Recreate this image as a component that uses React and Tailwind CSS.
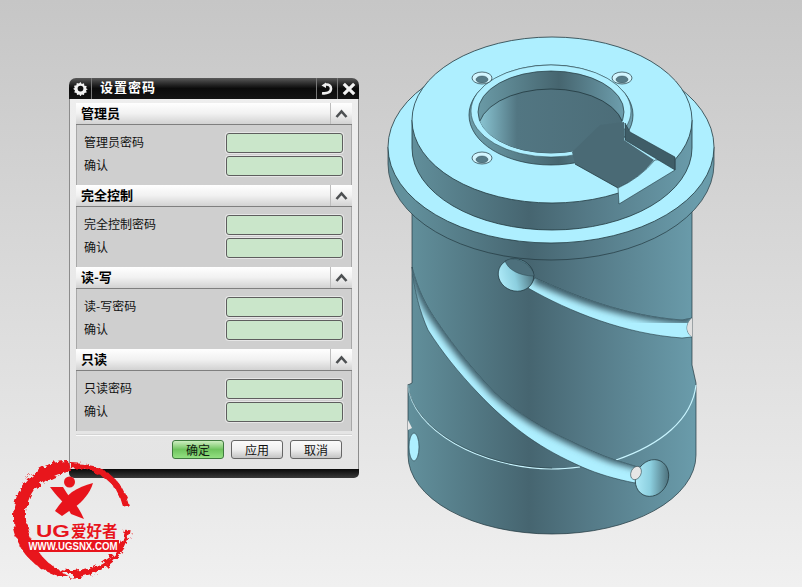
import { useId } from "react";

const CJK = "font-['Noto_Sans_CJK_SC','Liberation_Sans',sans-serif]";

const sections = [
  { title: "管理员", label: "管理员密码" },
  { title: "完全控制", label: "完全控制密码" },
  { title: "读-写", label: "读-写密码" },
  { title: "只读", label: "只读密码" },
];

function GearIcon() {
  return (
    <svg width="15" height="15" viewBox="0 0 24 24">
      <path
        d="M12 1.5l2 3.2 3.6-1 .6 3.7 3.7.6-1 3.6 2.6 1.4-2.6 1.9 1 3.6-3.7.6-.6 3.4-3.6-1-2 2.9-2-2.9-3.6 1-.6-3.4-3.7-.6 1-3.6L.1 12.4 2.7 11l-1-3.6 3.7-.6.6-3.7 3.6 1z"
        fill="#f2f2f2"
      />
      <circle cx="12" cy="12" r="4.6" fill="#111" />
    </svg>
  );
}

function Chevron() {
  return (
    <svg width="13" height="9" viewBox="0 0 13 9" fill="none">
      <path d="M1.5 8L6.5 2.5L11.5 8" stroke="#4d5052" strokeWidth="2.6" />
    </svg>
  );
}

function Section({ title, label }) {
  return (
    <div className="flex flex-col">
      <div className="flex h-[22px] items-stretch border-b border-[#7f7f7f] bg-gradient-to-b from-white via-[#f1f1f1] to-[#d2d2d2]">
        <div className="flex-1 pl-[5px] text-[13px] leading-[19px] font-bold text-black">{title}</div>
        <div className="flex w-[22px] items-center justify-center border-l border-[#bdbdbd]">
          <Chevron />
        </div>
      </div>
      <div className="flex h-[60px] flex-col gap-[3px] border-x border-[#a8a8a8] bg-[#cfcfcf] pt-[8px] pr-[8px] pl-[7px]">
        {[label, "确认"].map((text) => (
          <div key={text} className="flex h-[20px] items-center justify-between">
            <span className="mt-[-2px] text-[12px] text-[#111]">{text}</span>
            <input
              readOnly
              className="h-[20px] w-[117px] rounded-[3px] border border-[#5e5e5e] bg-[#cae6ca] shadow-[0_0_0_1px_#e6e6e6]"
            />
          </div>
        ))}
      </div>
    </div>
  );
}

function Dialog() {
  return (
    <div className={`absolute top-[78px] left-[69px] flex h-[400px] w-[290px] flex-col ${CJK}`}>
      <div className="flex h-[21px] items-stretch rounded-t-[7px] bg-gradient-to-b from-[#5a5a5a] via-[#0b0b0b] to-[#141414]">
        <div className="flex w-[23px] items-center justify-center border-r border-[#777]">
          <GearIcon />
        </div>
        <div className="flex-1 pl-[8px] text-[13px] leading-[18px] font-bold tracking-[1px] text-white">设置密码</div>
        <div className="flex w-[21px] items-center justify-center border-l border-[#777]">
          <svg width="14" height="13" viewBox="0 0 14 13" fill="none">
            <path d="M2 11.2C7.5 12 11 9.8 11 6.4C11 3.6 8.6 2 5.6 2.6" stroke="#eee" strokeWidth="2.6" />
            <path d="M1.5 3.4L6 .6V6z" fill="#eee" />
          </svg>
        </div>
        <div className="flex w-[22px] items-center justify-center border-l border-[#777]">
          <svg width="14" height="14" viewBox="0 0 14 14" fill="none">
            <path d="M1.8 1.8L12.2 12.2M12.2 1.8L1.8 12.2" stroke="#f2f2f2" strokeWidth="3.2" />
          </svg>
        </div>
      </div>
      <div className="flex flex-1 flex-col border-x border-[#8c8c8c] bg-gradient-to-b from-[#eeeeee] to-[#e4e4e4] px-[6px] pt-[4px]">
        {sections.map((s) => (
          <Section key={s.title} title={s.title} label={s.label} />
        ))}
        <div className="mt-[3px] h-[2px] border-b border-[#fafafa] bg-[#d4d4d4]" />
        <div className="mt-[4px] flex justify-end gap-[7px] pr-[10px]">
          <button className="h-[19px] w-[52px] rounded-[3px] border border-[#3f7a3f] bg-gradient-to-b from-[#cdeec0] via-[#6fc45e] to-[#93e082] text-[12px] leading-[14px] text-[#102010]">
            确定
          </button>
          <button className="h-[19px] w-[52px] rounded-[3px] border border-[#666] bg-gradient-to-b from-[#fbfbfb] via-[#efefef] to-[#c4c4c4] text-[12px] leading-[14px] text-[#111]">
            应用
          </button>
          <button className="h-[19px] w-[52px] rounded-[3px] border border-[#666] bg-gradient-to-b from-[#fbfbfb] via-[#efefef] to-[#c4c4c4] text-[12px] leading-[14px] text-[#111]">
            取消
          </button>
        </div>
      </div>
      <div className="h-[9px] rounded-b-[5px] bg-gradient-to-b from-[#0a0a0a] to-[#3a3a3a]" />
    </div>
  );
}

// the part in the 3D viewport
function Part() {
  const id = useId().replace(/:/g, "");
  const LIGHT = "#aeefff";
  const EDGE = "#22383f";
  const slotA =
    "M535 278C575 296 625 316 682 320L692 318C687 322 684 331 692 337L682 338C625 334 570 312 528 288Z";
  const slotB =
    "M412 267C418 290 426 306 438 323C455 348 475 372 495 393C518 414 542 428 568 440C585 448 600 455 615 460L641 468L635 483C615 479 598 474 582 467C562 458 545 449 528 437C510 424 494 410 478 393C458 372 442 352 428 330C420 312 414 290 412 267Z";
  return (
    <svg className="absolute inset-0" width="802" height="587" viewBox="0 0 802 587" fill="none">
      <defs>
        <linearGradient id={`${id}body`} gradientUnits="userSpaceOnUse" x1="408" y1="0" x2="696" y2="0">
          <stop offset="0" stopColor="#62909c" />
          <stop offset="0.42" stopColor="#466570" />
          <stop offset="0.62" stopColor="#547986" />
          <stop offset="1" stopColor="#6a9cab" />
        </linearGradient>
        <linearGradient id={`${id}wall`} gradientUnits="userSpaceOnUse" x1="478" y1="0" x2="625" y2="0">
          <stop offset="0" stopColor="#6a9aa6" />
          <stop offset="0.55" stopColor="#46656f" />
          <stop offset="1" stopColor="#6e9fae" />
        </linearGradient>
        <linearGradient id={`${id}floor`} gradientUnits="userSpaceOnUse" x1="478" y1="0" x2="655" y2="0">
          <stop offset="0" stopColor="#8cc8d6" />
          <stop offset="0.22" stopColor="#527682" />
          <stop offset="1" stopColor="#4a6a75" />
        </linearGradient>
        <linearGradient id={`${id}hole`} x1="0" y1="0.9" x2="1" y2="0.3">
          <stop offset="0" stopColor="#b8f2ff" />
          <stop offset="0.5" stopColor="#8ccfdf" />
          <stop offset="1" stopColor="#496b76" />
        </linearGradient>
        <clipPath id={`${id}clipA`}>
          <path d={slotA} />
        </clipPath>
        <clipPath id={`${id}clipB`}>
          <path d={slotB} />
        </clipPath>
        <clipPath id={`${id}bore`}>
          <ellipse cx="551" cy="112" rx="73" ry="41" />
        </clipPath>
        <filter id={`${id}blur`} x="-10%" y="-10%" width="120%" height="120%">
          <feGaussianBlur stdDeviation="3" />
        </filter>
      </defs>

      {/* lower body */}
      <path
        d={`M412 150V383L408 385V455A144 79 0 0 0 696 455V383L692 365V150Z`}
        fill={`url(#${id}body)`}
        stroke={EDGE}
        strokeWidth="0.7"
      />
      {/* ring gap */}
      <path d="M408 385C412 430 480 468 552 469C562 469 572 468 580 467" stroke="#c9f5ff" strokeWidth="1.2" />
      <path d="M696 385C692 420 660 445 616 460" stroke="#c9f5ff" strokeWidth="1.2" />
      <path d="M408 384C412 429 480 467 552 468" stroke={EDGE} strokeWidth="0.5" />

      {/* upper slot */}
      <path d={slotA} fill={LIGHT} stroke={EDGE} strokeWidth="0.6" />
      <g clipPath={`url(#${id}clipA)`}>
        <path d="M535 276C575 294 625 314 692 318" stroke="#3f5f6a" strokeWidth="14" filter={`url(#${id}blur)`} />
      </g>
      <ellipse cx="516" cy="275" rx="18" ry="16" transform="rotate(20 516 275)" fill={`url(#${id}hole)`} stroke={EDGE} strokeWidth="0.7" />
      <path d="M505 261C508 270 520 276 534 276C534 268 522 258 510 259Z" fill="#4d707c" stroke={EDGE} strokeWidth="0.4" />
      <path d="M692 318C687 322 684 331 692 337" fill="#e0e0e0" />

      {/* long slot */}
      <path d={slotB} fill={LIGHT} stroke={EDGE} strokeWidth="0.6" />
      <g clipPath={`url(#${id}clipB)`}>
        <path d="M412 262C418 288 426 304 438 321C455 346 475 370 495 391C518 412 542 426 568 438C585 446 600 453 615 458L645 466" stroke="#3f5f6a" strokeWidth="11" filter={`url(#${id}blur)`} />
      </g>
      <ellipse cx="652" cy="478" rx="16" ry="19" transform="rotate(28 652 478)" fill={`url(#${id}hole)`} stroke={EDGE} strokeWidth="0.7" />
      <ellipse cx="636" cy="473" rx="5" ry="7" transform="rotate(25 636 473)" fill="#e6e6e6" stroke={EDGE} strokeWidth="0.5" />

      {/* left hole */}
      <ellipse cx="414" cy="447" rx="5" ry="14" fill={LIGHT} stroke={EDGE} strokeWidth="0.6" />
      <path d="M408 420L412 428L408 430Z" fill="#e8e8e8" />

      {/* flange */}
      <path d="M388 147V164A163 96 0 0 0 714 164V147Z" fill={`url(#${id}body)`} stroke={EDGE} strokeWidth="0.7" />
      <ellipse cx="551" cy="147" rx="163" ry="96" fill={LIGHT} stroke={EDGE} strokeWidth="0.8" />

      {/* boss */}
      <path d="M412 120V148A140 82 0 0 0 692 148V120Z" fill={`url(#${id}body)`} stroke={EDGE} strokeWidth="0.8" />
      <ellipse cx="552" cy="120" rx="140" ry="83" fill={LIGHT} stroke={EDGE} strokeWidth="0.8" />

      {/* bore */}
      <ellipse cx="551" cy="115" rx="82" ry="50" fill={`url(#${id}wall)`} stroke={EDGE} strokeWidth="0.7" />
      <ellipse cx="551" cy="111" rx="80" ry="46" fill={LIGHT} stroke={EDGE} strokeWidth="0.5" />
      <ellipse cx="551" cy="112" rx="73" ry="41" fill={`url(#${id}wall)`} stroke={EDGE} strokeWidth="0.7" />
      <g clipPath={`url(#${id}bore)`}>
        <ellipse cx="551" cy="130" rx="73" ry="41" fill={`url(#${id}floor)`} stroke={EDGE} strokeWidth="0.8" />
      </g>

      {/* keyway */}
      <path d="M572 152L575 164L618 188Q640 178 654 160L624 140L624 122L600 125Z" fill="#4a6a75" />
      <path d="M575 164L618 188" stroke={EDGE} strokeWidth="0.8" />
      <path d="M618 188L619 204L675 170V159L655 160Q640 178 618 188Z" fill={LIGHT} stroke={EDGE} strokeWidth="0.6" />
      <path d="M630 132L675 157V170L655 158L625 140L625 123Z" fill="#3f5d67" stroke={EDGE} strokeWidth="0.6" />

      {/* screw holes */}
      {[
        [482, 78],
        [622, 78],
        [482, 158],
      ].map(([cx, cy]) => (
        <g key={`${cx}-${cy}`}>
          <ellipse cx={cx} cy={cy} rx="10" ry="6" fill="#d2f6ff" stroke={EDGE} strokeWidth="0.7" />
          <ellipse cx={cx} cy={cy + 1.5} rx="6" ry="3.5" fill="#577c88" stroke={EDGE} strokeWidth="0.4" />
        </g>
      ))}
    </svg>
  );
}

function Logo() {
  const id = useId().replace(/:/g, "");
  const RED = "#e8141c";
  return (
    <svg className="absolute top-[455px] left-[8px]" width="130" height="130" viewBox="8 455 130 130" fill="none">
      <defs>
        <filter id={`${id}rough`} x="-10%" y="-10%" width="120%" height="120%">
          <feTurbulence type="fractalNoise" baseFrequency="0.16" numOctaves="3" seed="4" />
          <feDisplacementMap in="SourceGraphic" scale="8" />
        </filter>
      </defs>
      <g filter={`url(#${id}rough)`}>
        <path d="M68 461C33 461 12 490 13 520C14 550 38 576 72 578C55 570 29 552 26 520C24 492 44 472 70 470Z" fill={RED} />
        <path d="M70 465C100 465 120 480 126 506" stroke={RED} strokeWidth="6" />
        <path d="M106 476C114 482 120 490 122 498" stroke={RED} strokeWidth="3" />
        <path d="M128 530C125 552 105 572 72 575" stroke={RED} strokeWidth="5.5" />
        <path d="M34 490C42 478 54 472 68 470" stroke={RED} strokeWidth="4" />
        <path d="M40 562C52 570 64 573 78 571" stroke={RED} strokeWidth="3" />
      </g>
      <circle cx="69.5" cy="482" r="5.5" fill={RED} />
      <path d="M50 487L63 487C68 495 72 501 76 505C80 510 82 515 84 519L71 514C68 508 64 503 60 499C56 495 53 491 50 487Z" fill={RED} />
      <path d="M93 483C90 493 83 501 75 507L62 516L55 511C60 503 66 497 72 492C78 488 85 485 93 483Z" fill={RED} />
      <text x="36" y="537" fontFamily="'Liberation Sans',sans-serif" fontSize="17" fontWeight="700" fill={RED} textLength="34" lengthAdjust="spacingAndGlyphs">
        UG
      </text>
      <text x="71" y="537" fontFamily="'Noto Sans CJK SC',sans-serif" fontSize="15.5" fontWeight="700" fill={RED}>
        爱好者
      </text>
      <rect x="27" y="540" width="92" height="12" fill={RED} />
      <text x="28.5" y="550" fontFamily="'Liberation Sans',sans-serif" fontSize="10.5" fontWeight="700" fill="#fff" textLength="89" lengthAdjust="spacingAndGlyphs">
        WWW.UGSNX.COM
      </text>
    </svg>
  );
}

export default function App() {
  return (
    <div className="relative h-[587px] w-[802px] overflow-hidden bg-gradient-to-b from-[#c6c6c6] to-[#f0f0f0]">
      <Part />
      <Dialog />
      <Logo />
    </div>
  );
}
